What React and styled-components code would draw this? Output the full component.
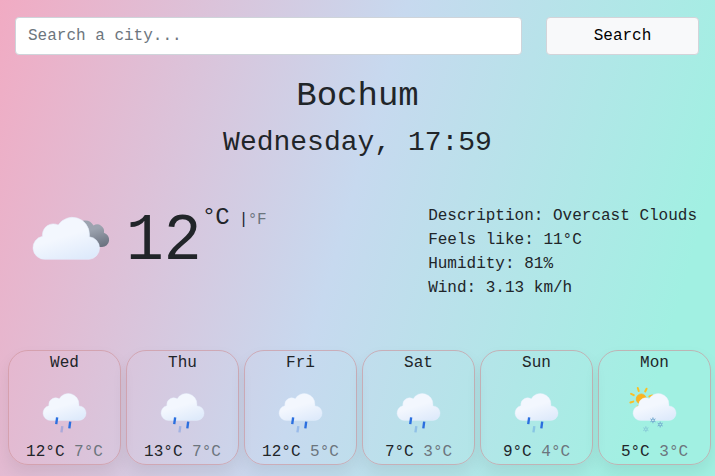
import React from "react";
import styled, { createGlobalStyle } from "styled-components";

const GlobalStyle = createGlobalStyle`
  * { box-sizing: border-box; }
  html { height: 100%; }
  body {
    margin: 0;
    height: 476px;
    overflow: hidden;
    font-family: "Liberation Mono", monospace;
    font-size: 16px;
    line-height: 24px;
    color: #212529;
    background: linear-gradient(106deg, #f1abc3 0%, #c7d9ef 48%, #a1f0e2 90%);
  }
`;

const Page = styled.main`
  display: flex;
  flex-direction: column;
  height: 476px;
  padding-top: 17px;
`;

const SearchForm = styled.form`
  display: grid;
  grid-template-columns: 507px 153px;
  column-gap: 24px;
  height: 38px;
  margin: 0 15px;
`;

const SearchInput = styled.input`
  min-width: 0;
  padding: 6px 12px;
  font: inherit;
  color: #212529;
  background: #fff;
  border: 1px solid #ced4da;
  border-radius: 4px;
  &::placeholder { color: #6c757d; opacity: 1; }
`;

const SearchButton = styled.button`
  padding: 6px 12px;
  font: inherit;
  color: #000;
  background: #f8f9fa;
  border: 1px solid #d3d4d9;
  border-radius: 4px;
`;

const City = styled.h1`
  margin: 20px 0 0;
  font-size: 34px;
  font-weight: 400;
  line-height: 42px;
  text-align: center;
`;

const DateLine = styled.h2`
  margin: 9px 0 0;
  font-size: 28px;
  font-weight: 400;
  line-height: 34px;
  text-align: center;
`;

const Current = styled.section`
  display: flex;
  justify-content: space-between;
  height: 110px;
  margin: 44px 18px 0 20px;
`;

const Reading = styled.div`
  display: flex;
  align-items: flex-start;
`;

const CurrentIcon = styled.svg`
  width: 100px;
  height: 65px;
  margin-top: 0;
`;

const Temperature = styled.strong`
  margin: 3px 0 0 6px;
  font-size: 63px;
  font-weight: 400;
  line-height: 70px;
  transform: scaleY(1.06);
`;

const Celsius = styled.span`
  margin-top: 1px;
  font-size: 24px;
  letter-spacing: -0.9px;
  line-height: 26px;
`;

const Fahrenheit = styled.span`
  margin: 4px 0 0 10px;
  color: #6c757d;
  letter-spacing: -0.4px;
`;

const Divider = styled.span`
  color: #212529;
`;

const Details = styled.ul`
  margin: 0;
  padding: 0;
  list-style: none;
`;

const Forecast = styled.section`
  display: grid;
  grid-template-columns: repeat(6, 113px);
  column-gap: 5px;
  margin: 36px 0 0 8px;
`;

const DayCard = styled.article`
  display: flex;
  flex-direction: column;
  align-items: center;
  height: 115px;
  border: 1px solid rgba(205, 145, 152, 0.62);
  border-radius: 20px;
  box-shadow: 0 8px 16px rgba(0, 0, 0, 0.07);
`;

const DayIcon = styled.svg`
  width: 60px;
  height: 60px;
  margin: 6px 0 0;
`;

const Range = styled.div`
  white-space: pre;
`;

const Low = styled.span`
  color: #6c757d;
`;

const details = [
  "Description: Overcast Clouds",
  "Feels like: 11°C",
  "Humidity: 81%",
  "Wind: 3.13 km/h",
];

const days = [
  ["Wed", 12, 7, "rain"],
  ["Thu", 13, 7, "rain"],
  ["Fri", 12, 5, "rain"],
  ["Sat", 7, 3, "rain"],
  ["Sun", 9, 4, "rain"],
  ["Mon", 5, 3, "snow"],
];

const rays = [27, 72, 117, 162, 207, 252, 297, 342];
const snow = [
  { x: 63, y: 421, o: 0.95 },
  { x: 70.4, y: 425.3, o: 0.9 },
  { x: 55.8, y: 430, o: 0.5 },
];

function Overcast() {
  return (
    <CurrentIcon viewBox="20 205 100 65" aria-hidden="true">
      <defs>
        <linearGradient id="white-cloud" x1="0.25" y1="0" x2="0.75" y2="1">
          <stop offset="0.45" stopColor="#f3f7fe" />
          <stop offset="1" stopColor="#deeafb" />
        </linearGradient>
        <linearGradient id="grey-cloud" x1="0.3" y1="0" x2="0.8" y2="1">
          <stop offset="0.4" stopColor="#9ca3af" />
          <stop offset="1" stopColor="#6b7280" />
        </linearGradient>
      </defs>
      <path
        fill="url(#grey-cloud)"
        d="M74 248H102A7.3 7.3 0 0 0 103.9 233.7A6.8 6.8 0 0 0 93.5 226.6A9.5 9.5 0 0 0 76 228A9 9 0 0 0 74 248Z"
      />
      <path
        fill="url(#white-cloud)"
        stroke="#e6effc"
        strokeWidth="0.6"
        d="M45 260.3H89.2A11.3 11.3 0 0 0 89.4 237.8L89.4 235A17 17 0 0 0 58.2 226A11 11 0 0 0 42.4 236L42.5 237.3A11.6 11.6 0 0 0 45 260.3Z"
      />
    </CurrentIcon>
  );
}

function SmallCloud() {
  return (
    <path
      fill="url(#day-cloud)"
      stroke="#e6effc"
      strokeWidth="0.4"
      d="M50.2 421.1H79A7.4 7.4 0 0 0 79.3 406.3V404.8A10.8 10.8 0 0 0 59.2 399A7 7 0 0 0 48.6 405.3V406.1A7.6 7.6 0 0 0 50.2 421.1Z"
    />
  );
}

function DailyIcon({ kind }) {
  return (
    <DayIcon viewBox="35.1 381 60 60" aria-hidden="true">
      <defs>
        <linearGradient id="day-cloud" x1="0.25" y1="0" x2="0.75" y2="1">
          <stop offset="0.45" stopColor="#f3f7fe" />
          <stop offset="1" stopColor="#deeafb" />
        </linearGradient>
      </defs>
      {kind === "snow" && (
        <g transform="translate(51.2 399.3)" stroke="#fbbf24" strokeWidth="2" strokeLinecap="round">
          <circle r="5.2" fill="#fbb321" stroke="#f8af18" strokeWidth="0.6" />
          {rays.map((angle) => (
            <path key={angle} d="M8.6 0H11.7" transform={`rotate(${angle})`} />
          ))}
        </g>
      )}
      <SmallCloud />
      {kind === "rain" ? (
        <g stroke="#2b6fdf" strokeWidth="2.4">
          <path d="M57.1 418L56.2 424.8" />
          <path d="M70.4 422.3L69.5 429.1" />
          <path d="M62.4 426.9L61.5 433.2" opacity="0.28" />
        </g>
      ) : (
        snow.map(({ x, y, o }) => (
          <g key={x} transform={`translate(${x} ${y})`} stroke="#72a9cf" strokeWidth="1" opacity={o}>
            <circle r="1.4" fill="none" />
            <path d="M0-3V-1M0 3V1M-2.6-1.5L-1-.6M2.6 1.5L1 .6M-2.6 1.5L-1 .6M2.6-1.5L1-.6" />
          </g>
        ))
      )}
    </DayIcon>
  );
}

export default function App() {
  return (
    <>
      <GlobalStyle />
      <Page>
        <SearchForm onSubmit={(event) => event.preventDefault()}>
          <SearchInput placeholder="Search a city..." aria-label="City" />
          <SearchButton>Search</SearchButton>
        </SearchForm>
        <City>Bochum</City>
        <DateLine>Wednesday, 17:59</DateLine>
        <Current>
          <Reading>
            <Overcast />
            <Temperature>12</Temperature>
            <Celsius>°C</Celsius>
            <Fahrenheit><Divider>|</Divider>°F</Fahrenheit>
          </Reading>
          <Details>
            {details.map((text) => <li key={text}>{text}</li>)}
          </Details>
        </Current>
        <Forecast>
          {days.map(([day, high, low, kind]) => (
            <DayCard key={day}>
              <span>{day}</span>
              <DailyIcon kind={kind} />
              <Range>{high}°C <Low>{low}°C</Low></Range>
            </DayCard>
          ))}
        </Forecast>
      </Page>
    </>
  );
}
